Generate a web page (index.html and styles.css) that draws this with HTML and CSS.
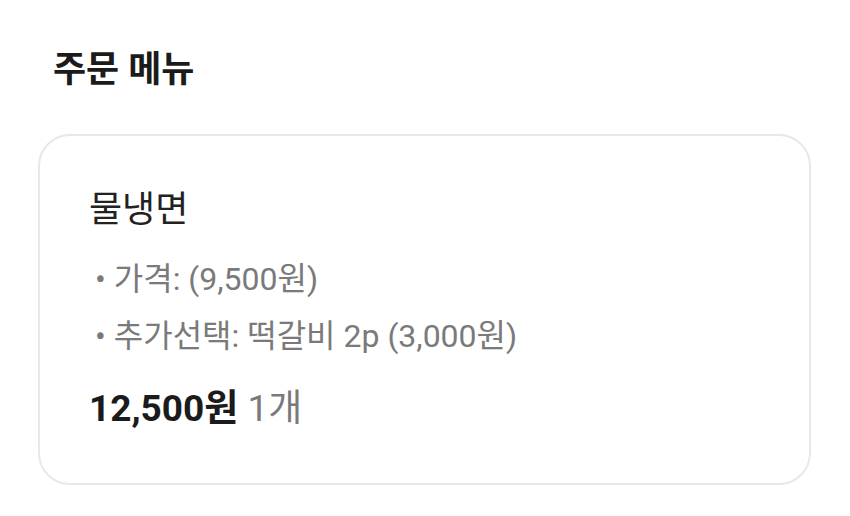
FILE: index.html
```html
<!DOCTYPE html>
<html lang="ko">

<head>
    <meta charset="UTF-8">
    <meta name="viewport" content="width=device-width, initial-scale=1.0">
    <title>주문 메뉴</title>
    <link rel="stylesheet" href="styles.css">
</head>

<body>
    <section class="order">
        <h2 class="order-title">주문 메뉴</h2>
        <div class="menu-card">
            <p class="menu-name">물냉면</p>
            <ul class="menu-options">
                <li>가격: (9,500원)</li>
                <li>추가선택: 떡갈비 2p (3,000원)</li>
            </ul>
            <p class="menu-total">
                <strong>12,500원</strong>
                <span class="qty">1개</span>
            </p>
        </div>
    </section>
</body>

</html>
```

FILE: styles.css
```css
body {
    margin: 0;
    background: #fff;
    font-family: Roboto, "Noto Sans CJK KR", sans-serif;
    color: #1b1b1b;
}

ul {
    list-style: none;
    padding: 0;
    margin: 0;
}

p {
    margin: 0;
}

.order {
    padding: 46px 39px 0 38px;
}

.order-title {
    margin: 0 0 40px 15px;
    font-size: 36px;
    font-weight: 700;
    line-height: 48px;
}

.menu-card {
    border: 2px solid #e8e8e8;
    border-radius: 32px;
    padding: 50px 49px 50px;
}

.menu-name {
    font-size: 36px;
    line-height: 48px;
    color: #222;
}

.menu-options {
    margin-top: 17px;
}

.menu-options li {
    font-size: 32px;
    line-height: 57px;
    color: #7a7a7a;
    padding-left: 6px;
}

.menu-options li::before {
    content: "•";
    margin-right: 8px;
}

.menu-total {
    margin-top: 20px;
    font-size: 37px;
    line-height: 48px;
}

.menu-total strong {
    font-weight: 700;
}

.menu-total .qty {
    color: #7a7a7a;
}
```
